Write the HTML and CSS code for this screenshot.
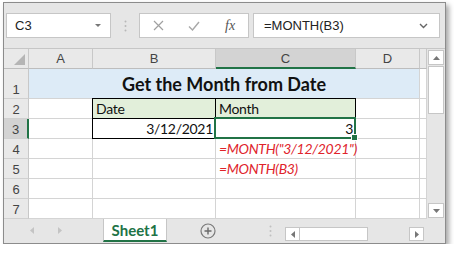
FILE: index.html
```html
<!DOCTYPE html>
<html>

<head>
    <meta charset="utf-8" />
    <title>Get the Month from Date</title>
    <link rel="stylesheet" href="styles.css">
</head>

<body>
    <div class="win">
        <div class="fbar">
            <div class="namebox"><span>C3</span><i class="caret"></i></div>
            <svg class="grip" width="3" height="12" viewBox="0 0 3 12"><circle cx="1.5" cy="1.5" r="1" fill="#b8b8b8"/><circle cx="1.5" cy="6" r="1" fill="#b8b8b8"/><circle cx="1.5" cy="10.5" r="1" fill="#b8b8b8"/></svg>
            <div class="fbtns">
                <svg width="11" height="11" viewBox="0 0 11 11"><path d="M1 1L10 10M10 1L1 10" stroke="#a0a0a0" stroke-width="1.2" fill="none"/></svg>
                <svg class="ok" width="12" height="10" viewBox="0 0 12 10"><path d="M1 5.5L4.5 9L11 1" stroke="#a8a8a8" stroke-width="1.4" fill="none"/></svg>
                <span class="fx">fx</span>
            </div>
            <div class="finput"><span>=MONTH(B3)</span>
                <svg class="chev" width="9" height="6" viewBox="0 0 9 6"><path d="M1 1L4.5 4.5L8 1" stroke="#666" stroke-width="1.4" fill="none"/></svg>
            </div>
        </div>

        <div class="sheet">
            <div class="grid">
                <div class="h corner"><svg width="11" height="11" viewBox="0 0 11 11"><polygon points="11,0 11,11 0,11" fill="#b5b5b5"/></svg></div>
                <div class="h">A</div>
                <div class="h">B</div>
                <div class="h sel-col">C</div>
                <div class="h">D</div>
                <div class="h"></div>

                <div class="h rh">1</div>
                <div class="c title">Get the Month from Date</div>
                <div class="c"></div>

                <div class="h rh">2</div>
                <div class="c"></div>
                <div class="c box label">Date</div>
                <div class="c box label">Month</div>
                <div class="c"></div>
                <div class="c"></div>

                <div class="h rh sel-row">3</div>
                <div class="c"></div>
                <div class="c box num">3/12/2021</div>
                <div class="c box num active">3</div>
                <div class="c"></div>
                <div class="c"></div>

                <div class="h rh">4</div>
                <div class="c"></div>
                <div class="c"></div>
                <div class="c note">=MONTH("3/12/2021")</div>
                <div class="c"></div>
                <div class="c"></div>

                <div class="h rh">5</div>
                <div class="c"></div>
                <div class="c"></div>
                <div class="c note">=MONTH(B3)</div>
                <div class="c"></div>
                <div class="c"></div>

                <div class="h rh">6</div>
                <div class="c"></div>
                <div class="c"></div>
                <div class="c"></div>
                <div class="c"></div>
                <div class="c"></div>

                <div class="h rh">7</div>
                <div class="c"></div>
                <div class="c"></div>
                <div class="c"></div>
                <div class="c"></div>
                <div class="c"></div>
            </div>
            <div class="vscroll">
                <div class="sbtn"><svg width="7" height="4" viewBox="0 0 7 4"><polygon points="0,4 3.5,0 7,4" fill="#777"/></svg></div>
                <div class="vthumb"></div>
                <div class="sbtn"><svg width="7" height="4" viewBox="0 0 7 4"><polygon points="0,0 7,0 3.5,4" fill="#777"/></svg></div>
            </div>
        </div>

        <div class="tabs">
            <div class="nav">
                <svg width="4" height="7" viewBox="0 0 4 7"><polygon points="4,0 0,3.5 4,7" fill="#c4c4c4"/></svg>
                <svg width="4" height="7" viewBox="0 0 4 7"><polygon points="0,0 4,3.5 0,7" fill="#c4c4c4"/></svg>
            </div>
            <div class="tab">Sheet1</div>
            <svg class="add" width="16" height="16" viewBox="0 0 16 16"><circle cx="8" cy="8" r="7" stroke="#7a7a7a" stroke-width="1.2" fill="none"/><path d="M8 4.5V11.5M4.5 8H11.5" stroke="#6a6a6a" stroke-width="1.4"/></svg>
            <svg class="grip2" width="3" height="12" viewBox="0 0 3 12"><circle cx="1.5" cy="1.5" r="1" fill="#c0c0c0"/><circle cx="1.5" cy="6" r="1" fill="#c0c0c0"/><circle cx="1.5" cy="10.5" r="1" fill="#c0c0c0"/></svg>
            <div class="hscroll">
                <div class="hbtn"><svg width="4" height="7" viewBox="0 0 4 7"><polygon points="4,0 0,3.5 4,7" fill="#777"/></svg></div>
                <div class="hthumb"></div>
                <div class="htrough"></div>
                <div class="hbtn"><svg width="4" height="7" viewBox="0 0 4 7"><polygon points="0,0 4,3.5 0,7" fill="#777"/></svg></div>
            </div>
        </div>
    </div>
</body>

</html>
```

FILE: styles.css
```css
    * {
        box-sizing: border-box;
        margin: 0;
        padding: 0;
    }

    body {
        background: #fff;
        font-family: "Liberation Sans", Arial, sans-serif;
    }

    /* window */

    .win {
        margin: 2px 0 0 3px;
        width: 443px;
        border: 1px solid #8c8c8c;
        background: #e6e6e6;
        box-shadow: 3px 3px 5px rgba(0, 0, 0, 0.35);
    }

    /* formula bar */

    .fbar {
        height: 46px;
        display: flex;
        align-items: flex-start;
        padding-top: 10px;
        border-bottom: 1px solid #c6c6c6;
    }

    .namebox,
    .fbtns,
    .finput {
        height: 25px;
        background: #fff;
        border: 1px solid #c6c6c6;
        display: flex;
        align-items: center;
        font-size: 13px;
        color: #222;
    }

    .namebox {
        margin-left: 2px;
        width: 105px;
        padding-left: 8px;
    }

    .caret {
        margin-left: auto;
        margin-right: 9px;
        border-left: 3px solid transparent;
        border-right: 3px solid transparent;
        border-top: 3px solid #777;
    }

    .grip {
        margin: 7px 0 0 13px;
    }

    .fbtns {
        margin-left: 12px;
        width: 110px;
        padding-left: 13px;
    }

    .fbtns .ok {
        margin-left: 24px;
    }

    .fx {
        margin-left: 25px;
        font: italic 14px "Liberation Serif", serif;
        color: #555;
    }

    .finput {
        margin-left: 4px;
        width: 187px;
        padding-left: 10px;
    }

    .chev {
        margin-left: auto;
        margin-right: 11px;
    }

    /* sheet */

    .sheet {
        display: flex;
        background: #fff;
    }

    .grid {
        display: grid;
        grid-template-columns: 25px 64px 123px 140px 64px 7px;
        grid-template-rows: 20px 30px repeat(6, 20px);
    }

    .h {
        background: #e9e9e9;
        border-right: 1px solid #c8c8c8;
        border-bottom: 1px solid #bdbdbd;
        display: flex;
        align-items: center;
        justify-content: center;
        font-size: 13px;
        color: #444;
    }

    .corner {
        align-items: flex-end;
        justify-content: flex-end;
        padding: 0 3px 3px 0;
    }

    .rh {
        align-items: flex-end;
        padding-bottom: 1px;
        border-bottom-color: #d0d0d0;
    }

    .sel-col {
        background: #d3d3d3;
        border-bottom: 2px solid #217346;
    }

    .sel-row {
        background: #d3d3d3;
        border-right: 2px solid #217346;
    }

    .c {
        border-right: 1px solid #d4d4d4;
        border-bottom: 1px solid #d4d4d4;
        display: flex;
        align-items: flex-end;
        padding: 0 3px 1px;
        font-family: Lato, "Liberation Sans", sans-serif;
        font-size: 14px;
        letter-spacing: -0.3px;
        color: #111;
        white-space: nowrap;
    }

    .title {
        grid-column: span 4;
        justify-content: center;
        padding-bottom: 3px;
        background: #ddebf7;
        font-weight: bold;
        font-size: 18px;
        letter-spacing: 0;
    }

    .box {
        border-right-color: #000;
        border-bottom-color: #000;
        box-shadow: 0 -1px 0 #000, -1px 0 0 #000, -1px -1px 0 #000;
    }

    .label {
        background: #e2efda;
    }

    .num {
        justify-content: flex-end;
        padding-right: 2px;
    }

    .active {
        position: relative;
    }

    .active::after {
        content: "";
        position: absolute;
        top: -2px;
        left: -2px;
        right: -1px;
        bottom: -1px;
        border: 2px solid #217346;
    }

    .active::before {
        content: "";
        position: absolute;
        right: -3px;
        bottom: -3px;
        width: 5px;
        height: 5px;
        background: #217346;
        border: 1px solid #fff;
        z-index: 1;
    }

    .note {
        color: #e0232b;
        font-style: italic;
    }

    /* vertical scrollbar */

    .vscroll {
        width: 18px;
        background: #e6e6e6;
        display: flex;
        flex-direction: column;
        padding: 1px 1px 1px 1px;
    }

    .sbtn {
        height: 15px;
        background: #fff;
        border: 1px solid #c6c6c6;
        display: flex;
        align-items: center;
        justify-content: center;
    }

    .vthumb {
        height: 48px;
        margin: 1px 0 auto;
        background: #fff;
        border: 1px solid #c6c6c6;
    }

    /* sheet tabs */

    .tabs {
        height: 24px;
        display: flex;
        align-items: flex-start;
    }

    .nav {
        width: 99px;
        height: 23px;
        display: flex;
        align-items: center;
        padding-left: 26px;
        gap: 24px;
    }

    .tab {
        width: 64px;
        height: 23px;
        background: #fff;
        border-left: 1px solid #c6c6c6;
        border-right: 1px solid #c6c6c6;
        border-bottom: 2px solid #217346;
        display: flex;
        align-items: center;
        justify-content: center;
        font-family: Lato, "Liberation Sans", sans-serif;
        font-weight: bold;
        font-size: 15px;
        color: #217346;
    }

    .add {
        margin: 4px 0 0 33px;
    }

    .grip2 {
        margin: 6px 0 0 53px;
    }

    .hscroll {
        margin: 8px 0 0 13px;
        width: 139px;
        height: 14px;
        display: flex;
    }

    .hbtn {
        width: 15px;
        background: #fff;
        border: 1px solid #c6c6c6;
        display: flex;
        align-items: center;
        justify-content: center;
    }

    .hthumb {
        width: 68px;
        background: #fff;
        border: 1px solid #c6c6c6;
        border-left: 0;
    }

    .htrough {
        flex: 1;
    }
```
